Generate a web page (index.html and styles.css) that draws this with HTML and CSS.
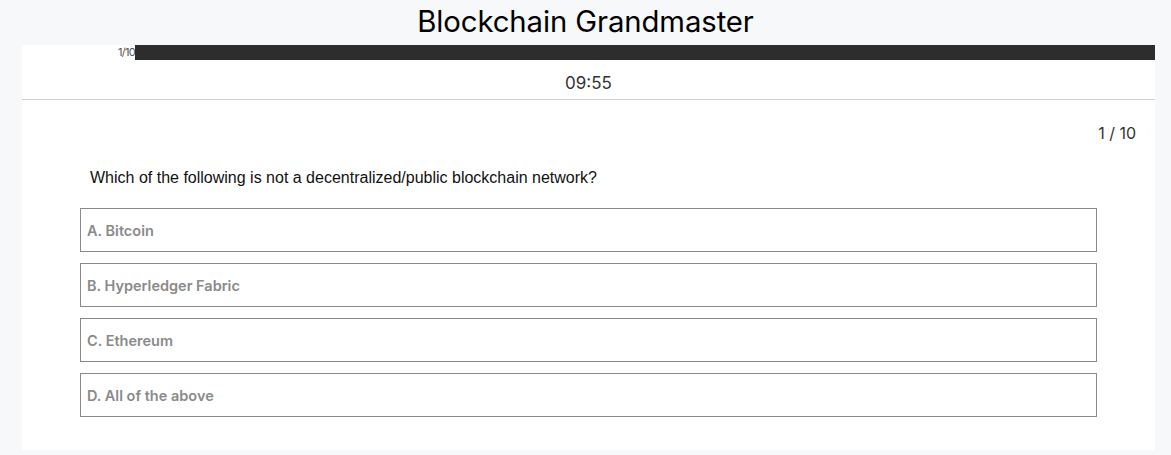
FILE: index.html
```html
<!DOCTYPE html>
<html lang="en">
<head>
<meta charset="utf-8">
<title>Blockchain Grandmaster</title>
<link rel="stylesheet" href="styles.css">
</head>
<body>
<h1 class="title">Blockchain Grandmaster</h1>
<main class="card">
  <div class="progress-row">
    <span class="progress-label">1/10</span>
    <div class="progress-bar"></div>
  </div>
  <div class="timer">09:55</div>
  <section class="quiz">
    <div class="counter">1 / 10</div>
    <p class="question">Which of the following is not a decentralized/public blockchain network?</p>
    <ul class="options">
      <li class="option">A. Bitcoin</li>
      <li class="option">B. Hyperledger Fabric</li>
      <li class="option">C. Ethereum</li>
      <li class="option">D. All of the above</li>
    </ul>
  </section>
</main>
</body>
</html>
```
FILE: styles.css
```css
html, body {
  margin: 0;
  padding: 0;
}
body {
  background: #f7f8fa;
  font-family: "Inter", "Liberation Sans", sans-serif;
  color: #111;
  width: 1171px;
  height: 455px;
  overflow: hidden;
}
.title {
  margin: 0;
  height: 45px;
  line-height: 43px;
  font-size: 29.3px;
  font-weight: 400;
  text-align: center;
  color: #000;
  letter-spacing: -0.1px;
}
.card {
  background: #fff;
  margin: 0 16px 0 22px;
  height: 405px;
}
.progress-row {
  display: flex;
  align-items: center;
  height: 15px;
}
.progress-label {
  width: 113px;
  text-align: right;
  font-size: 11px;
  letter-spacing: -0.7px;
  color: #555;
  line-height: 15px;
}
.progress-bar {
  flex: 1;
  height: 15px;
  background: #2d2d2d;
}
.timer {
  height: 39px;
  line-height: 46px;
  text-align: center;
  font-size: 17px;
  color: #333;
  border-bottom: 1px solid #cfcfcf;
}
.quiz {
  padding: 0 58px 0 58px;
}
.counter {
  text-align: right;
  margin-right: -39px;
  padding-top: 24px;
  font-size: 16px;
  line-height: 18px;
  color: #333;
}
.question {
  margin: 27px 0 0 10px;
  font-family: "Liberation Sans", Arial, sans-serif;
  font-size: 16px;
  line-height: 18px;
  color: #111;
}
.options {
  list-style: none;
  margin: 21px 0 0 0;
  padding: 0;
  display: flex;
  flex-direction: column;
  gap: 11px;
}
.option {
  height: 44px;
  box-sizing: border-box;
  border: 1px solid #8a8a8a;
  padding: 0 6px;
  display: flex;
  align-items: center;
  font-size: 14.5px;
  font-weight: 600;
  color: #8a8a8a;
}
```
